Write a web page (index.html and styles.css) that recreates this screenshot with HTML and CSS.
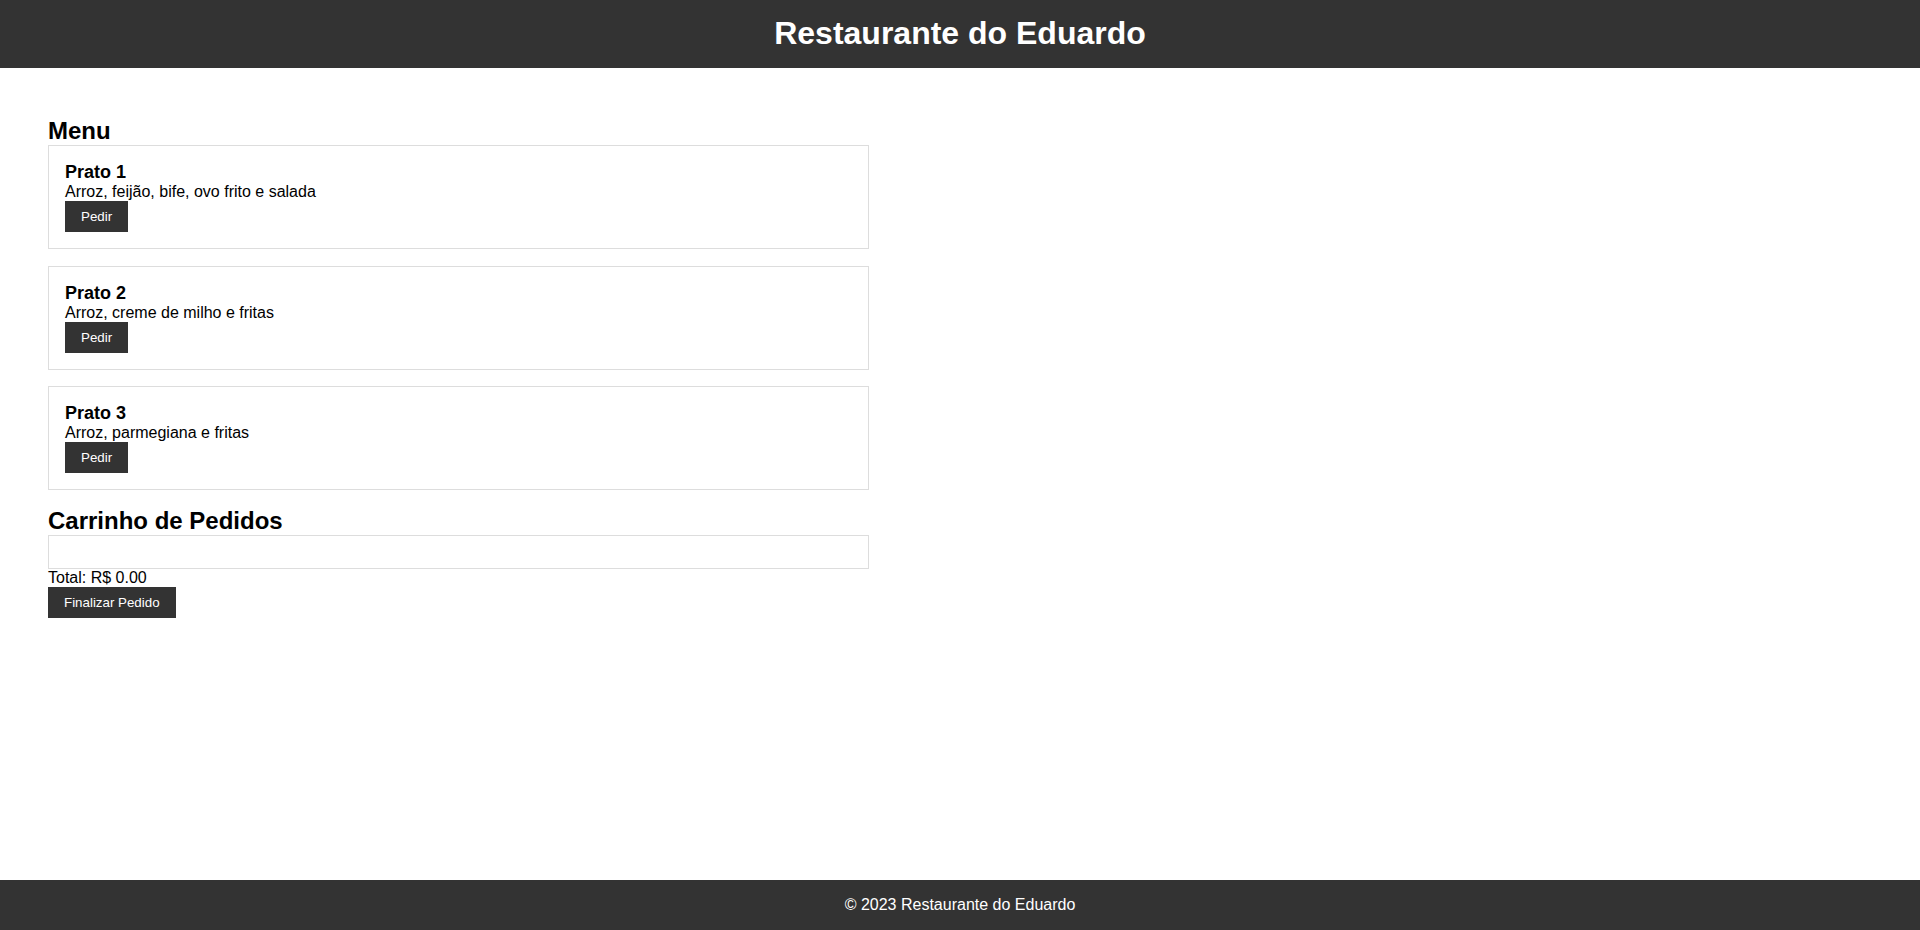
FILE: index.html
```html
<!DOCTYPE html>
<html lang="pt-BR">
<head>
<meta charset="utf-8">
<title>Restaurante do Eduardo</title>
<link rel="stylesheet" href="styles.css">
</head>
<body>
<header class="site-header">
  <h1 class="site-title">Restaurante do Eduardo</h1>
</header>
<main class="content">
  <section class="menu">
    <h2 class="section-title">Menu</h2>
    <div class="dish">
      <h3 class="dish-name">Prato 1</h3>
      <p class="dish-desc">Arroz, feijão, bife, ovo frito e salada</p>
      <button class="btn">Pedir</button>
    </div>
    <div class="dish">
      <h3 class="dish-name">Prato 2</h3>
      <p class="dish-desc">Arroz, creme de milho e fritas</p>
      <button class="btn">Pedir</button>
    </div>
    <div class="dish">
      <h3 class="dish-name">Prato 3</h3>
      <p class="dish-desc">Arroz, parmegiana e fritas</p>
      <button class="btn">Pedir</button>
    </div>
  </section>
  <section class="cart">
    <h2 class="section-title">Carrinho de Pedidos</h2>
    <div class="cart-items"></div>
    <p class="cart-total">Total: R$ 0.00</p>
    <button class="btn">Finalizar Pedido</button>
  </section>
</main>
<footer class="site-footer">
  <p class="footer-text">© 2023 Restaurante do Eduardo</p>
</footer>
</body>
</html>
```
FILE: styles.css
```css
html, body {
  margin: 0;
  padding: 0;
}

body {
  font-family: "Liberation Sans", Arial, sans-serif;
  font-size: 16px;
  color: #000;
  background: #fff;
  min-height: 100vh;
  display: flex;
  flex-direction: column;
}

.site-header {
  background: #333;
  color: #fff;
  padding: 15px 0 16px;
  text-align: center;
}

.site-title {
  margin: 0;
  font-size: 32px;
  font-weight: bold;
}

.content {
  padding: 49px 48px 0;
}

.menu,
.cart {
  width: 45%;
}

.section-title {
  margin: 0;
  font-size: 24px;
  font-weight: bold;
}

.dish {
  border: 1px solid #ddd;
  padding: 16px;
  margin-bottom: 16.5px;
}

.dish-name {
  margin: 0;
  font-size: 18px;
  font-weight: bold;
}

.dish-desc {
  margin: 0;
}

.btn {
  display: block;
  background: #333;
  color: #fff;
  border: none;
  padding: 8px 16px;
  font-family: "Liberation Sans", Arial, sans-serif;
  font-size: 13.333px;
  cursor: pointer;
}

.cart-items {
  border: 1px solid #ddd;
  padding: 16px;
}

.cart-total {
  margin: 0;
}

.site-footer {
  margin-top: auto;
  background: #333;
  color: #fff;
  text-align: center;
  padding: 16px 0;
}

.footer-text {
  margin: 0;
}
```
